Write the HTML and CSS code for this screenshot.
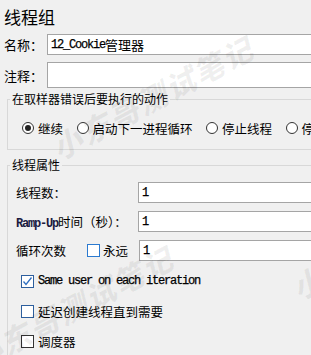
FILE: index.html
```html
<!DOCTYPE html>
<html lang="zh-CN">
<head>
    <meta charset="UTF-8">
    <title>线程组</title>
    <link rel="stylesheet" href="styles.css">
</head>
<body>
    <div class="page">
        <div class="title">线程组</div>

        <div class="field-row name-row">
            <span class="label">名称：</span>
            <div class="field"><span class="mono">12_Cookie</span>管理器</div>
        </div>

        <div class="field-row notes-row">
            <span class="label">注释：</span>
            <div class="field"></div>
        </div>

        <fieldset class="group error-group">
            <legend>在取样器错误后要执行的动作</legend>
            <div class="radio-row">
                <span class="radio checked"></span><span class="radio-text">继续</span>
                <span class="radio"></span><span class="radio-text">启动下一进程循环</span>
                <span class="radio"></span><span class="radio-text">停止线程</span>
                <span class="radio"></span><span class="radio-text">停止测试</span>
            </div>
        </fieldset>

        <fieldset class="group thread-group">
            <legend>线程属性</legend>
            <div class="prop-row">
                <span class="prop-label">线程数：</span>
                <div class="field small"><span class="mono">1</span></div>
            </div>
            <div class="prop-row">
                <span class="prop-label"><span class="mono bold">Ramp-Up</span>时间（秒）：</span>
                <div class="field small"><span class="mono">1</span></div>
            </div>
            <div class="prop-row loop-row">
                <span class="loop-label">循环次数</span>
                <span class="box forever"></span><span class="forever-text">永远</span>
                <div class="field small"><span class="mono">1</span></div>
            </div>

            <div class="check-row first">
                <span class="box checked">
                    <svg width="11" height="11" viewBox="0 0 11 11"><path d="M1.5 5.5 L4 8.5 L9.5 1.5" fill="none" stroke="#2f6fc0" stroke-width="1.3"/></svg>
                </span>
                <span class="mono">Same user on each iteration</span>
            </div>
            <div class="check-row">
                <span class="box"></span>
                <span>延迟创建线程直到需要</span>
            </div>
            <div class="check-row">
                <span class="box grey"></span>
                <span>调度器</span>
            </div>
        </fieldset>

        <span class="mark mark-one">小东哥测试笔记</span>
        <span class="mark mark-two">小东哥测试笔记</span>
        <span class="mark mark-three">小东哥测试笔记</span>
    </div>
</body>
</html>
```

FILE: styles.css
```css
body {
    margin: 0;
    padding: 0;
    background-color: #f0f0f0;
    font-family: "Noto Sans CJK SC", "Noto Sans", sans-serif;
    font-size: 12.5px;
    color: #000;
}

.page {
    position: relative;
    width: 311px;
    height: 355px;
    overflow: hidden;
    padding-left: 4px;
    box-sizing: border-box;
}

.title {
    font-size: 17px;
    height: 34px;
    line-height: 33px;
}

.mono {
    font-family: "Liberation Mono", monospace;
    font-size: 12px;
    letter-spacing: -1.2px;
    -webkit-text-stroke: 0.25px #000;
}

.bold {
    font-weight: bold;
    color: #1a1a40;
    -webkit-text-stroke: 0;
}

.field-row {
    display: flex;
    align-items: center;
}

.label {
    width: 43px;
    flex-shrink: 0;
    font-size: 13px;
}

.field {
    width: 320px;
    flex-shrink: 0;
    height: 21px;
    box-sizing: border-box;
    background-color: #fff;
    border: 1px solid #a5a5a5;
    padding-left: 3px;
    display: flex;
    align-items: center;
    font-size: 13px;
}

.notes-row {
    margin-top: 7px;
}

.notes-row .field {
    height: 26px;
}

/* group boxes */
.group {
    margin: 0 -40px 0 3px;
    padding: 0;
    border: 1px solid #d8d8d8;
}

.group legend {
    padding: 0 2px;
    margin-left: 2px;
    line-height: 16px;
    font-size: 12px;
}

.error-group {
    margin-top: 3px;
}

.radio-row {
    height: 42px;
    display: flex;
    align-items: center;
    padding-left: 14px;
    white-space: nowrap;
}

.radio {
    width: 12px;
    height: 12px;
    box-sizing: border-box;
    border: 1px solid #333;
    border-radius: 50%;
    background-color: #fff;
    margin-right: 4px;
    flex-shrink: 0;
    display: flex;
    align-items: center;
    justify-content: center;
}

.radio.checked::after {
    content: "";
    width: 6px;
    height: 6px;
    border-radius: 50%;
    background-color: #222;
}

.radio-text {
    margin-right: 13.5px;
}

.thread-group {
    margin-top: 7px;
    height: 260px;
}

.prop-row {
    display: flex;
    align-items: center;
    padding-left: 8px;
    margin-top: 8px;
}

.prop-row:first-of-type {
    margin-top: 9px;
}

.prop-label {
    width: 122px;
    flex-shrink: 0;
}

.loop-label {
    width: 71px;
    flex-shrink: 0;
}

.forever-text {
    width: 36px;
    flex-shrink: 0;
}

.box {
    width: 13px;
    height: 13px;
    box-sizing: border-box;
    border: 1px solid #2d5f9e;
    background-color: #fff;
    flex-shrink: 0;
    margin-right: 4px;
    display: flex;
    align-items: center;
    justify-content: center;
}

.box.forever {
    border-color: #2b7ad0;
    margin-right: 3px;
}

.box.grey {
    border-color: #333;
}

.check-row {
    display: flex;
    align-items: center;
    height: 30px;
    padding-left: 13px;
}

.check-row.first {
    margin-top: 5px;
}

/* watermark drawn over the form */
.mark {
    position: absolute;
    font-size: 30px;
    font-weight: 900;
    font-style: italic;
    letter-spacing: 2px;
    color: rgba(0, 0, 0, 0.06);
    white-space: nowrap;
    transform: rotate(-28deg);
    pointer-events: none;
}

.mark-one {
    left: 40px;
    top: 75px;
}

.mark-two {
    left: -40px;
    top: 285px;
}

.mark-three {
    left: 280px;
    top: 215px;
}
```
